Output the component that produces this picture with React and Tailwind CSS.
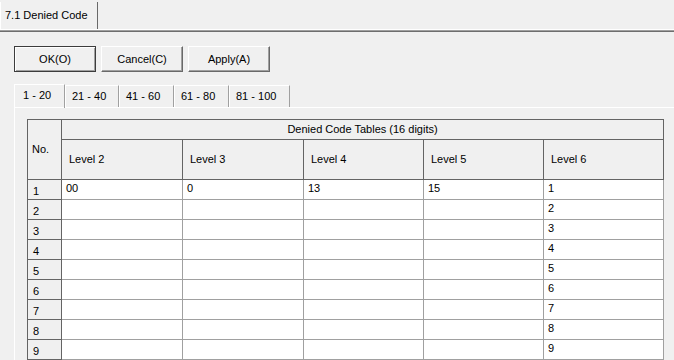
import React from 'react';

const levels = ['Level 2', 'Level 3', 'Level 4', 'Level 5', 'Level 6'];
const colWidths = ['w-[121px]', 'w-[121px]', 'w-[120px]', 'w-[120px]', 'w-[120px]'];

const rows = [
  ['00', '0', '13', '15', '1'],
  ['', '', '', '', '2'],
  ['', '', '', '', '3'],
  ['', '', '', '', '4'],
  ['', '', '', '', '5'],
  ['', '', '', '', '6'],
  ['', '', '', '', '7'],
  ['', '', '', '', '8'],
  ['', '', '', '', '9'],
];

const rangeTabs = ['1 - 20', '21 - 40', '41 - 60', '61 - 80', '81 - 100'];
const rangeWidths = ['w-[51px]', 'w-[54px]', 'w-[55px]', 'w-[55px]', 'w-[61px]'];

const App = () => {
  return (
    <div className="w-[674px] h-[360px] overflow-hidden bg-[#f0f0f0] text-[11px] text-black font-['Liberation_Sans',Arial,sans-serif]">
      {/* Page tab */}
      <div className="h-[29px] flex items-end">
        <div className="h-[27px] w-[98px] flex items-center pl-[4px] border-l border-white border-r border-r-[#696969] bg-[#f0f0f0]">
          7.1 Denied Code
        </div>
      </div>
      <div className="h-[3px] border-t border-white border-b border-b-[#6e6e6e] bg-[#a0a0a0]"></div>

      {/* Buttons */}
      <div className="flex pl-[14px] pt-[14px] gap-[5px]">
        <button className="w-[82px] h-[26px] border border-[#3c3c3c] shadow-[inset_1px_1px_0_#ffffff,inset_-1px_-1px_0_#a0a0a0] bg-[#f0f0f0]">
          OK(O)
        </button>
        <button className="w-[82px] h-[26px] border border-t-white border-l-white border-r-[#696969] border-b-[#696969] shadow-[inset_-1px_-1px_0_#a0a0a0] bg-[#f0f0f0]">
          Cancel(C)
        </button>
        <button className="w-[82px] h-[26px] border border-t-white border-l-white border-r-[#696969] border-b-[#696969] shadow-[inset_-1px_-1px_0_#a0a0a0] bg-[#f0f0f0]">
          Apply(A)
        </button>
      </div>

      {/* Range tabs */}
      <div className="flex items-end pl-[14px] mt-[11px] h-[24px]">
        {rangeTabs.map((t, i) => (
          <div
            key={t}
            className={`${rangeWidths[i]} flex items-center border-l border-white border-r border-r-[#a0a0a0] border-t border-t-white ${
              i === 0 ? 'h-[24px] pl-[8px] pb-[3px] relative z-10 -mb-px' : 'h-[22px] pl-[6px]'
            }`}
          >
            {t}
          </div>
        ))}
      </div>

      {/* Panel */}
      <div className="border-t border-white ml-[14px] border-l pl-[12px] pt-[11px]">
        <table className="border-collapse table-fixed">
          <thead>
            <tr className="h-[20px]">
              <th
                rowSpan={2}
                className="w-[34px] border border-[#646464] font-normal text-left pl-[4px] align-middle"
              >
                No.
              </th>
              <th colSpan={5} className="border border-[#646464] font-normal text-center">
                Denied Code Tables (16 digits)
              </th>
            </tr>
            <tr className="h-[40px]">
              {levels.map((l, i) => (
                <th
                  key={l}
                  className={`${colWidths[i]} border border-[#646464] font-normal text-left pl-[7px] align-middle`}
                >
                  {l}
                </th>
              ))}
            </tr>
          </thead>
          <tbody>
            {rows.map((r, ri) => (
              <tr key={ri} className="h-[20px]">
                <td className="border border-[#646464] pl-[5px] pt-[3px] leading-[14px] align-middle">{ri + 1}</td>
                {r.map((v, ci) => (
                  <td
                    key={ci}
                    className="border border-[#a0a0a0] bg-white pl-[4px] align-top pt-[1px] leading-[14px]"
                  >
                    {v}
                  </td>
                ))}
              </tr>
            ))}
          </tbody>
        </table>
      </div>
    </div>
  );
};

export default App;
